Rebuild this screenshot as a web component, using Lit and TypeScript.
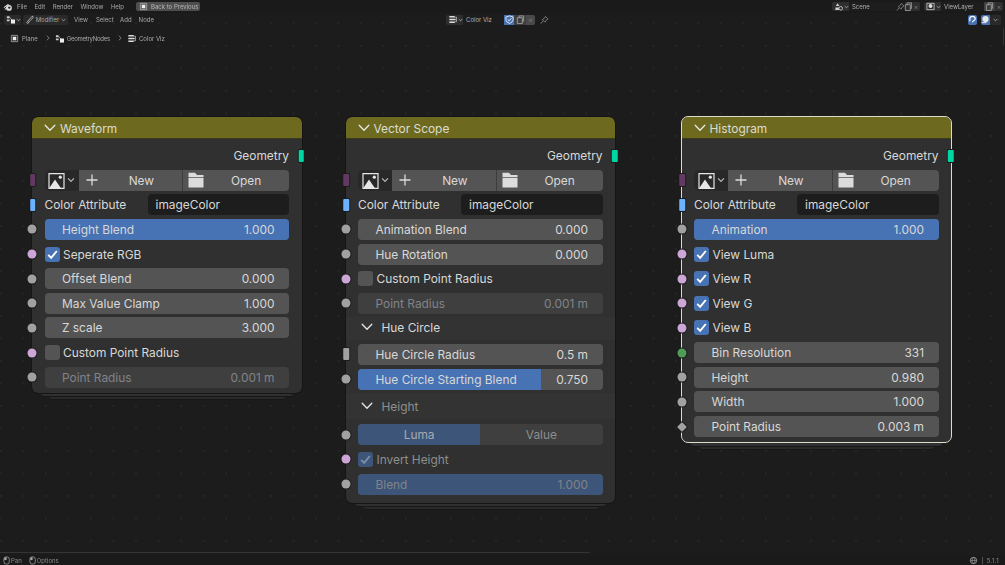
import { LitElement, html, css, svg, nothing } from 'lit'
import { customElement, property } from 'lit/decorators.js'
import { classMap } from 'lit/directives/class-map.js'

type Socket = 'value' | 'bool' | 'int' | 'image' | 'attr' | 'vector' | 'diamond'

type Row =
  | { kind: 'output'; label: string }
  | { kind: 'image' }
  | { kind: 'attr' }
  | { kind: 'slider'; label: string; value: string; socket: Socket; fill?: number; dim?: boolean }
  | { kind: 'check'; label: string; socket: Socket; checked?: boolean; dim?: boolean }
  | { kind: 'panel'; label: string; dim?: boolean; tall?: boolean }
  | { kind: 'enum'; socket: Socket; options: string[] }

interface NodeData {
  title: string
  left: number
  top: number
  selected?: boolean
  rows: Row[]
}

const head: Row[] = [{ kind: 'output', label: 'Geometry' }, { kind: 'image' }, { kind: 'attr' }]

const NODES: NodeData[] = [
  {
    title: 'Waveform',
    left: 32,
    top: 117,
    rows: [
      ...head,
      { kind: 'slider', label: 'Height Blend', value: '1.000', socket: 'value', fill: 100 },
      { kind: 'check', label: 'Seperate RGB', socket: 'bool', checked: true },
      { kind: 'slider', label: 'Offset Blend', value: '0.000', socket: 'value' },
      { kind: 'slider', label: 'Max Value Clamp', value: '1.000', socket: 'value' },
      { kind: 'slider', label: 'Z scale', value: '3.000', socket: 'value' },
      { kind: 'check', label: 'Custom Point Radius', socket: 'bool' },
      { kind: 'slider', label: 'Point Radius', value: '0.001 m', socket: 'value', dim: true },
    ],
  },
  {
    title: 'Vector Scope',
    left: 345.5,
    top: 117,
    rows: [
      ...head,
      { kind: 'slider', label: 'Animation Blend', value: '0.000', socket: 'value' },
      { kind: 'slider', label: 'Hue Rotation', value: '0.000', socket: 'value' },
      { kind: 'check', label: 'Custom Point Radius', socket: 'bool' },
      { kind: 'slider', label: 'Point Radius', value: '0.001 m', socket: 'value', dim: true },
      { kind: 'panel', label: 'Hue Circle' },
      { kind: 'slider', label: 'Hue Circle Radius', value: '0.5 m', socket: 'vector' },
      { kind: 'slider', label: 'Hue Circle Starting Blend', value: '0.750', socket: 'value', fill: 75 },
      { kind: 'panel', label: 'Height', dim: true, tall: true },
      { kind: 'enum', socket: 'value', options: ['Luma', 'Value'] },
      { kind: 'check', label: 'Invert Height', socket: 'bool', checked: true, dim: true },
      { kind: 'slider', label: 'Blend', value: '1.000', socket: 'value', fill: 100, dim: true },
    ],
  },
  {
    title: 'Histogram',
    left: 681.5,
    top: 117,
    selected: true,
    rows: [
      ...head,
      { kind: 'slider', label: 'Animation', value: '1.000', socket: 'value', fill: 100 },
      { kind: 'check', label: 'View Luma', socket: 'bool', checked: true },
      { kind: 'check', label: 'View R', socket: 'bool', checked: true },
      { kind: 'check', label: 'View G', socket: 'bool', checked: true },
      { kind: 'check', label: 'View B', socket: 'bool', checked: true },
      { kind: 'slider', label: 'Bin Resolution', value: '331', socket: 'int' },
      { kind: 'slider', label: 'Height', value: '0.980', socket: 'value' },
      { kind: 'slider', label: 'Width', value: '1.000', socket: 'value' },
      { kind: 'slider', label: 'Point Radius', value: '0.003 m', socket: 'diamond' },
    ],
  },
]

const chevron = html`<svg class="chevron" viewBox="0 0 12 8"><path d="M1.200 1.200 6 6.200l4.800-5" fill="none" stroke="currentColor" stroke-width="1.300" stroke-linecap="round" stroke-linejoin="round"/></svg>`
const picture = html`<svg class="picture" viewBox="0 0 17 17"><path d="M1 1.600h15v14.800H1z" fill="none" stroke="#e6e6e6" stroke-width="1.200"/><path d="M1 16.400 7 7.400l6.200 9z" fill="#e6e6e6"/><circle cx="12.300" cy="5.200" r="1.600" fill="#e6e6e6"/></svg>`
const plus = html`<svg class="glyph" viewBox="0 0 18 18"><path d="M9 3.500v11M3.500 9h11" stroke="#dcdcdc" stroke-width="1.300"/></svg>`
const folder = html`<svg class="glyph" viewBox="0 0 18 18"><path d="M1.500 1.800h6.500l2 2.200h6.500v2.200h-15z M1.500 7h15v9.500h-15z" fill="#dcdcdc"/></svg>`
const tick = html`<svg viewBox="0 0 15 15"><path d="M3.200 7.800 6.200 10.900 11.800 4" fill="none" stroke="currentColor" stroke-width="1.900"/></svg>`

const logo = svg`<path d="M1 6.200 5 3.400 M2 8.200 5 6 M5 2.600 8 4.600" stroke="#ddd" stroke-width="1.200" fill="none"/><circle cx="6.600" cy="6.600" r="3.200" fill="#ddd"/><circle cx="7" cy="6.200" r="1.300" fill="#2c2c2c"/>`
const nodesIcon = svg`<path d="M1 1.500h3v2H1zM1 5h3v2H1z" fill="#ccc"/><path d="M4 2.500 7 6" stroke="#ccc" stroke-width=".8"/><rect x="5.500" y="5" width="4.500" height="4.500" fill="#eee"/>`
const treeIcon = svg`<path d="M1.500 2h6M1.500 5h7M1.500 8h6" stroke="#ddd" stroke-width="1.600"/><path d="M7.500 2.500h2v5h-2" stroke="#ddd" fill="none" stroke-width=".7"/>`
const frameIcon = svg`<path d="M1.500 1.500h7v7h-7z" fill="none" stroke="#bbb" stroke-width=".8"/><rect x="3" y="3" width="4" height="4" fill="#eee"/>`
const modIcon = svg`<path d="M8.500 1 5 4.500 2 8.500 3 9.500 6 6 9 3z" fill="none" stroke="#ccc" stroke-width=".9"/>`
const sceneIcon = svg`<path d="M2 4.500 4 1.500 6 4.500zM1.500 6h4v3h-4z" fill="#ccc"/><circle cx="7.500" cy="7" r="2" fill="none" stroke="#ccc"/>`
const layerIcon = svg`<path d="M1 1.500h8v7H1z" fill="none" stroke="#ccc" stroke-width=".9"/><circle cx="5" cy="4.500" r="2.200" fill="#ddd"/>`
const copyIcon = svg`<path d="M1.500 3h5.500v6.500H1.500z M3.500 3V1h5v6H7" fill="none" stroke="#aaa" stroke-width=".9"/>`
const pinIcon = svg`<path d="M6 1.500 9 4.500 7 5.500 5.500 8 2.500 5 5 3.500zM3.500 6.500 1 9.500" fill="none" stroke="#888" stroke-width=".9"/>`
const shield = svg`<path d="M5 1 9 2.200V5c0 2.200-1.800 3.500-4 4.300C2.800 8.500 1 7.200 1 5V2.200z" fill="none" stroke="#fff" stroke-width=".9"/><path d="M3 5 4.600 6.500 7 3.500" fill="none" stroke="#fff" stroke-width=".9"/>`
const magnet = svg`<path d="M2 7V4.500a3 3 0 0 1 6 0c0 1.800-3 1.500-3 3.500" fill="none" stroke="#fff" stroke-width="1.300"/>`
const overlay = svg`<circle cx="5" cy="4.500" r="3.500" fill="#e8e8e8"/><path d="M1 8.500h5" stroke="#e8e8e8" stroke-width="1.200"/>`
const mouse = svg`<rect x="1" y="1" width="6" height="8" rx="2.500" fill="none" stroke="#aaa" stroke-width=".8"/><path d="M1.500 1.500h2.500v3h-2.500z" fill="#aaa"/>`
const globe = svg`<circle cx="5" cy="5" r="3.500" fill="none" stroke="#aaa" stroke-width=".9"/><path d="M1.500 5h7M5 1.500c-2 2-2 5 0 7M5 1.500c2 2 2 5 0 7" fill="none" stroke="#aaa" stroke-width=".6"/>`

const ico = (body: unknown) => html`<svg class="ico" viewBox="0 0 10 10">${body}</svg>`
const caret = html`<svg class="caret" viewBox="0 0 6 4"><path d="M.8.8 3 3 5.200.8" fill="none" stroke="#bbb" stroke-width=".9"/></svg>`

@customElement('blender-node')
export class BlenderNode extends LitElement {
  @property({ attribute: false }) data!: NodeData

  static styles = css`
    :host {
      position: absolute;
      display: block;
      width: 269.500px;
      font: 11.900px Inter, 'Noto Sans', sans-serif;
      color: #d8d8d8;
    }
    .stack {
      position: absolute;
      border-radius: 0 0 5px 5px;
      border-bottom: 1px solid #161616;
    }
    .stack.one {
      left: 8px;
      right: 8px;
      bottom: -4.500px;
      height: 20px;
      background: #303030;
    }
    .stack.two {
      left: 16px;
      right: 15px;
      bottom: -7.500px;
      height: 20px;
      background: #2a2a2a;
    }
    .card {
      position: relative;
      background: #303030;
      border-radius: 6px;
      outline: 1px solid #151515;
      padding-bottom: 5px;
    }
    .card.selected {
      outline: 1.500px solid #dcdcc8;
      outline-offset: -0.500px;
    }
    .title {
      display: flex;
      align-items: center;
      gap: 4px;
      height: 22px;
      padding: 1px 0 0 12px;
      background: #6d6a1f;
      border-radius: 6px 6px 0 0;
      border-bottom: 1px solid #3c3a1c;
      box-sizing: border-box;
      color: #dcdcd0;
    }
    .chevron {
      width: 12px;
      height: 8px;
      color: #e6e6e6;
    }
    .body {
      display: flex;
      flex-direction: column;
      gap: 3.650px;
      padding: 6px 12.500px 0;
    }
    .row {
      position: relative;
      display: flex;
      align-items: center;
      height: 21px;
    }
    .panel ~ .row:last-child {
      margin-bottom: 3px;
    }
    .sock {
      position: absolute;
      top: 50%;
      left: -12.500px;
      width: 9px;
      height: 9px;
      transform: translate(-50%, -50%);
      border-radius: 50%;
      background: #a1a1a1;
      box-shadow: 0 0 0 1px #1c1c1c;
    }
    .sock.bool {
      background: #cca6d6;
    }
    .sock.int {
      background: #4f9c57;
    }
    .sock.image,
    .sock.attr,
    .sock.vector {
      left: -12px;
      width: 5.500px;
      height: 12px;
      border-radius: 1px;
    }
    .sock.image {
      background: #633863;
    }
    .sock.attr {
      background: #6cb2ff;
    }
    .sock.diamond {
      width: 7px;
      height: 7px;
      border-radius: 1px;
      transform: translate(-50%, -50%) rotate(45deg);
    }
    .sock.out {
      left: auto;
      right: -12px;
      transform: translate(50%, -50%);
      width: 5.500px;
      height: 12px;
      border-radius: 1px;
      background: #00d6a3;
    }
    .output {
      justify-content: flex-end;
    }
    .image-row {
      flex: 1;
      border-radius: 4px;
      overflow: hidden;
      background: #545454;
    }
    .browse {
      display: flex;
      align-items: center;
      justify-content: center;
      gap: 2px;
      width: 34px;
      height: 100%;
      background: #282828;
    }
    .picture {
      width: 17px;
      height: 17px;
    }
    .caret {
      width: 8px;
      height: 6px;
    }
    .action {
      display: flex;
      align-items: center;
      flex: 1;
      height: 100%;
      padding-left: 4px;
      box-sizing: border-box;
    }
    .action + .action {
      padding-right: 2px;
      border-left: 1px solid #3c3c3c;
    }
    .action span {
      flex: 1;
      text-align: center;
    }
    .glyph {
      width: 18px;
      height: 18px;
    }
    .attr-field {
      width: 141.500px;
      margin-left: auto;
      height: 21px;
      padding-left: 8px;
      box-sizing: border-box;
      display: flex;
      align-items: center;
      background: #1d1d1d;
      border-radius: 4px;
    }
    .slider {
      position: relative;
      display: flex;
      flex: 1;
      align-items: center;
      justify-content: space-between;
      height: 100%;
      padding: 0 14.500px 0 17.500px;
      box-sizing: border-box;
      background: #545454;
      border-radius: 4px;
      overflow: hidden;
    }
    .slider .fill {
      position: absolute;
      left: 0;
      top: 0;
      bottom: 0;
      background: #4772b3;
    }
    .slider span {
      position: relative;
    }
    .dimmed .slider {
      background: #3f3f3f;
    }
    .dimmed .slider .fill {
      background: #3e557a;
    }
    .dimmed .slider span {
      color: #808388;
    }
    .box {
      width: 15px;
      height: 15px;
      margin-right: 3.500px;
      border-radius: 3px;
      background: #545454;
      color: #fff;
    }
    .box.on {
      background: #4772b3;
    }
    .dimmed .box.on {
      background: #3e557a;
      color: #7d8fa8;
    }
    .dimmed .check-label {
      color: #8e8e8e;
    }
    .panel {
      height: 22.500px;
      margin: 0 -12.500px 0.300px;
      padding: 0 0 3px 15px;
      box-sizing: border-box;
      gap: 9px;
      background: #333333;
    }
    .panel.tall {
      height: 26px;
      margin-bottom: 1.500px;
      padding-bottom: 0;
    }
    .panel.dim span {
      color: #8e8e8e;
    }
    .enum {
      display: flex;
      flex: 1;
      height: 100%;
      border-radius: 4px;
      overflow: hidden;
      background: #3f3f3f;
      color: #8e8e8e;
    }
    .enum div {
      display: flex;
      flex: 1;
      align-items: center;
      justify-content: center;
    }
    .enum .active {
      background: #3e557a;
      color: #a6abb3;
    }
  `

  private socket(type: Socket) {
    return html`<i class=${classMap({ sock: true, [type]: true })}></i>`
  }

  private renderRow(row: Row) {
    switch (row.kind) {
      case 'output':
        return html`<div class="row output">${row.label}<i class="sock out"></i></div>`
      case 'image':
        return html`<div class="row">
          ${this.socket('image')}
          <div class="row image-row">
            <div class="browse">${picture}${caret}</div>
            <div class="action">${plus}<span>New</span></div>
            <div class="action">${folder}<span>Open</span></div>
          </div>
        </div>`
      case 'attr':
        return html`<div class="row">
          ${this.socket('attr')}Color Attribute
          <div class="attr-field">imageColor</div>
        </div>`
      case 'slider':
        return html`<div class=${classMap({ row: true, dimmed: !!row.dim })}>
          ${this.socket(row.socket)}
          <div class="slider">
            ${row.fill ? html`<div class="fill" style="width:${row.fill}%"></div>` : nothing}
            <span>${row.label}</span><span>${row.value}</span>
          </div>
        </div>`
      case 'check':
        return html`<div class=${classMap({ row: true, dimmed: !!row.dim })}>
          ${this.socket(row.socket)}
          <div class=${classMap({ box: true, on: !!row.checked })}>${row.checked ? tick : nothing}</div>
          <span class="check-label">${row.label}</span>
        </div>`
      case 'panel':
        return html`<div class=${classMap({ row: true, panel: true, dim: !!row.dim, tall: !!row.tall })}>
          ${chevron}<span>${row.label}</span>
        </div>`
      case 'enum':
        return html`<div class="row dimmed">
          ${this.socket(row.socket)}
          <div class="enum">
            ${row.options.map((o, i) => html`<div class=${i === 0 ? 'active' : ''}>${o}</div>`)}
          </div>
        </div>`
    }
  }

  render() {
    const d = this.data
    return html`
      <div class="stack two"></div>
      <div class="stack one"></div>
      <div class=${classMap({ card: true, selected: !!d.selected })}>
        <div class="title">${chevron}<span>${d.title}</span></div>
        <div class="body">${d.rows.map((r) => this.renderRow(r))}</div>
      </div>
    `
  }
}

@customElement('app-root')
export class AppRoot extends LitElement {
  static styles = css`
    :host {
      position: relative;
      display: block;
      width: 1005px;
      height: 565px;
      overflow: hidden;
      background-color: #1c1c1c;
      background-image: radial-gradient(circle at 1px 1px, #262626 0.800px, transparent 1px);
      background-size: 22.500px 22.500px;
      font: 6px Inter, 'Noto Sans', sans-serif;
      color: #a9a9a9;
      white-space: nowrap;
    }
    .top {
      background: #1a1a1a;
      height: 13px;
      display: flex;
      align-items: center;
      filter: blur(0.300px);
    }
    .bar {
      display: flex;
      align-items: center;
      height: 13px;
      filter: blur(0.300px);
    }
    .ico {
      width: 9px;
      height: 9px;
      flex: none;
    }
    .caret {
      width: 5px;
      height: 4px;
      flex: none;
    }
    .logo {
      margin-left: 3px;
      margin-right: 4px;
    }
    .menu {
      margin-left: 7.500px;
    }
    .back {
      display: flex;
      align-items: center;
      gap: 3px;
      height: 9px;
      width: 64px;
      padding-left: 3px;
      box-sizing: border-box;
      background: #4e4e4e;
      border-radius: 2px;
      color: #b8b8b8;
    }
    .pill {
      display: flex;
      align-items: center;
      gap: 1px;
      height: 10px;
      padding: 0 2px;
      box-sizing: border-box;
      background: #2a2a2a;
      border-radius: 2px;
    }
    .widget {
      display: flex;
      align-items: center;
      height: 10px;
      background: #2e2e2e;
      border-radius: 2px;
      overflow: hidden;
    }
    .w-icon {
      display: flex;
      align-items: center;
      gap: 1px;
      width: 17px;
      padding-left: 2px;
      box-sizing: border-box;
    }
    .w-field {
      display: flex;
      align-items: center;
      height: 100%;
      padding-left: 3px;
      box-sizing: border-box;
      background: #1d1d1d;
    }
    .w-btn {
      display: flex;
      align-items: center;
      justify-content: center;
      height: 100%;
      background: #3e3e3e;
    }
    .w-btn.blue {
      background: #4772b3;
    }
    .w-x {
      color: #777;
      font-size: 7px;
    }
    .crumbs {
      display: flex;
      align-items: center;
      height: 12px;
      margin-top: 6px;
      padding-left: 10px;
      filter: blur(0.300px);
    }
    .sep {
      width: 4px;
      height: 6px;
      margin: 0 5px 0 8px;
    }
    .node-pos {
      z-index: 1;
    }
    .scroll-h {
      position: absolute;
      left: 0;
      bottom: 12px;
      width: 590px;
      height: 1.500px;
      background: #343434;
    }
    .scroll-v {
      position: absolute;
      right: 1px;
      top: 28px;
      width: 1.500px;
      height: 17px;
      background: #343434;
    }
    .status {
      position: absolute;
      left: 0;
      right: 0;
      bottom: 0;
      display: flex;
      align-items: center;
      height: 10px;
      padding: 0 6px 0 3px;
      background: #1a1a1a;
      color: #8a8a8a;
      filter: blur(0.300px);
    }
  `

  render() {
    return html`
      <div class="top">
        <span class="logo">${ico(logo)}</span>
        <span style="margin-left:1px">File</span>
        <span class="menu">Edit</span>
        <span class="menu">Render</span>
        <span class="menu">Window</span>
        <span class="menu">Help</span>
        <div class="back" style="position:absolute;left:136px">${ico(frameIcon)}Back to Previous</div>
        <div class="widget" style="margin-left:auto;width:88px;height:9px">
          <div class="w-icon">${ico(sceneIcon)}${caret}</div>
          <div class="w-field" style="width:56px;justify-content:space-between;color:#b0b0b0">Scene ${ico(pinIcon)}</div>
          <div class="w-btn" style="width:7px;background:#2e2e2e">${ico(copyIcon)}</div>
          <div class="w-btn w-x" style="width:8px;background:#2e2e2e">×</div>
        </div>
        <div class="widget" style="margin:0 2px 0 4px;width:79px;height:9px">
          <div class="w-icon">${ico(layerIcon)}${caret}</div>
          <div class="w-field" style="width:43px;color:#b0b0b0">ViewLayer</div>
          <div class="w-btn" style="width:11px">${ico(copyIcon)}</div>
          <div class="w-btn w-x" style="width:8px;background:#2e2e2e">×</div>
        </div>
      </div>
      <div class="bar">
        <div class="pill" style="margin-left:4px;width:17px">${ico(nodesIcon)}${caret}</div>
        <div class="pill" style="margin-left:2px;width:45px;justify-content:space-between">${ico(modIcon)}Modifier${caret}</div>
        <span style="margin-left:6px">View</span>
        <span style="margin-left:8px">Select</span>
        <span style="margin-left:6.500px">Add</span>
        <span style="margin-left:7px">Node</span>
        <div class="widget" style="position:absolute;left:446px;width:89px">
          <div class="w-icon">${ico(treeIcon)}${caret}</div>
          <div class="w-field" style="width:41px;color:#b0b0b0">Color Viz</div>
          <div class="w-btn blue" style="width:10px">${ico(shield)}</div>
          <div class="w-btn" style="width:12px">${ico(copyIcon)}</div>
          <div class="w-btn w-x" style="width:9px;background:#4a4a4a">×</div>
        </div>
        <span style="position:absolute;left:540px;top:2px">${ico(pinIcon)}</span>
        <div class="w-btn blue" style="margin-left:auto;width:9px;height:10px;border-radius:2px">${ico(magnet)}</div>
        <div class="w-btn blue" style="margin-left:4px;width:9px;height:10px;border-radius:2px 0 0 2px">${ico(overlay)}</div>
        <div class="pill" style="width:11px;margin-right:4px;justify-content:center">${caret}</div>
      </div>
      <div class="crumbs">
        ${ico(frameIcon)}
        <span style="margin-left:3px">Plane</span>
        <svg class="sep" viewBox="0 0 4 6"><path d="M.7.7 3.200 3 .7 5.300" fill="none" stroke="#999" stroke-width=".7"/></svg>
        ${ico(nodesIcon)}
        <span style="margin-left:3px;letter-spacing:-.25px">GeometryNodes</span>
        <svg class="sep" viewBox="0 0 4 6"><path d="M.7.7 3.200 3 .7 5.300" fill="none" stroke="#999" stroke-width=".7"/></svg>
        ${ico(treeIcon)}
        <span style="margin-left:3px">Color Viz</span>
      </div>
      ${NODES.map((n) => html`<blender-node class="node-pos" .data=${n} style="left:${n.left}px;top:${n.top}px"></blender-node>`)}
      <div class="scroll-h"></div>
      <div class="scroll-v"></div>
      <div class="status">
        ${ico(mouse)}<span style="margin:0 7px 0 -1px">Pan</span>
        ${ico(mouse)}<span style="margin-left:-1px">Options</span>
        <span style="margin-left:auto;display:flex;align-items:center;letter-spacing:.3px">${ico(globe)}<span style="margin:0 3px">|</span>5.1.1</span>
      </div>
    `
  }
}
